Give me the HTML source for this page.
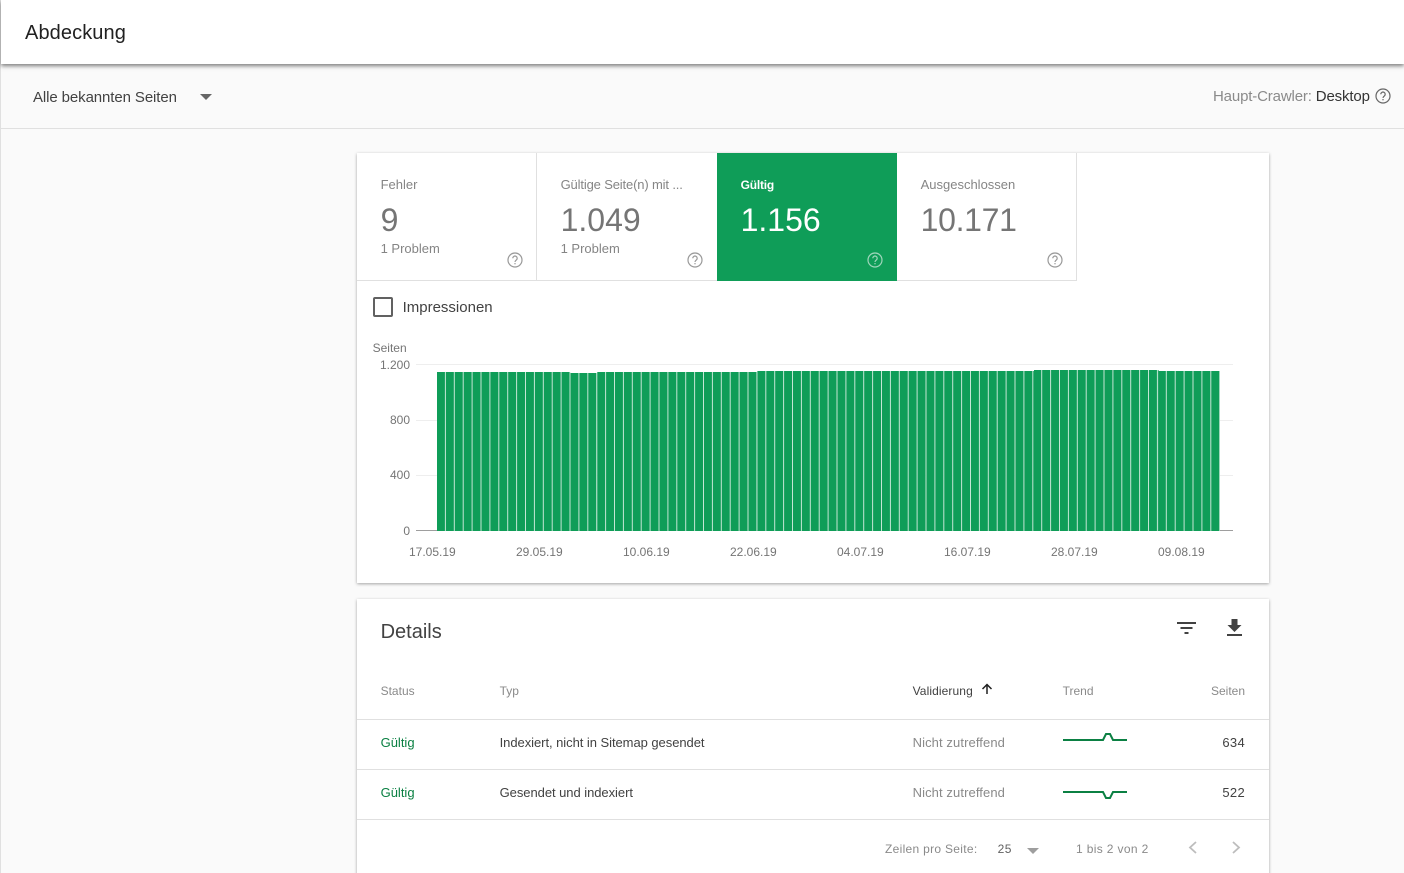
<!DOCTYPE html>
<html style="overflow:hidden;width:1404px;height:873px"><head><meta charset="utf-8"><title>Abdeckung</title>
<style>
html,body{margin:0;padding:0}
body{width:1404px;height:873px;overflow:hidden;position:relative;background:#fafafa;font-family:"Liberation Sans",sans-serif;color:#212121}
#w{position:absolute;left:0;top:0;width:1404px;height:873px;overflow:hidden}
.a{position:absolute;white-space:nowrap;line-height:1}
.b{position:absolute}
.card{position:absolute;background:#fff;box-shadow:0 1px 3px rgba(0,0,0,.35)}
.lab{font-size:13px;color:#858585}
.num{font-size:32px;color:#757575}
.g{font-size:12px;color:#757575}
.d{font-size:13px;color:#212121}
</style></head><body><div id="w">
<svg width="0" height="0" style="position:absolute"><defs>
<symbol id="q" viewBox="0 0 16 16"><circle cx="8" cy="8" r="7" fill="none" stroke="currentColor" stroke-width="1.2"/><path d="M5.8 6.3a2.2 2.2 0 1 1 3.4 1.8c-.8.5-1.2.9-1.2 1.9" fill="none" stroke="currentColor" stroke-width="1.2"/><rect x="7.4" y="11" width="1.2" height="1.3" fill="currentColor"/></symbol>
<pattern id="bars" patternUnits="userSpaceOnUse" x="437" y="0" width="8.9" height="10"><rect x="0" y="0" width="8" height="10" fill="#0f9d58"/><rect x="8" y="0" width="0.9" height="10" fill="#c4e6d5"/></pattern>
</defs></svg>

<div class="b" style="left:0;top:0;width:1px;height:873px;background:#e0e0e0"></div>
<div class="b" style="left:1px;top:0;width:1403px;height:64px;background:#fff;box-shadow:0 2px 4px rgba(0,0,0,.5)"></div>
<div class="a" style="left:25px;top:22.500px;font-size:20px;color:#212121;letter-spacing:.1px">Abdeckung</div>
<div class="a" style="left:33px;top:90px;font-size:15px;color:#424242;letter-spacing:-.1px">Alle bekannten Seiten</div>
<div class="b" style="left:200px;top:94px;width:0;height:0;border-left:6px solid transparent;border-right:6px solid transparent;border-top:6px solid #666"></div>
<div class="a" style="left:1213px;top:89px;font-size:15px;color:#8a8a8a;letter-spacing:-.15px">Haupt-Crawler: <span style="color:#333">Desktop</span></div>
<svg class="b" style="left:1374.6px;top:88px;color:#666" width="16" height="16"><use href="#q"/></svg>
<div class="b" style="left:1px;top:128px;width:1403px;height:1px;background:#e0e0e0"></div>

<div class="card" style="left:357px;top:153px;width:912px;height:430px"></div>
<div class="b" style="left:357px;top:280px;width:720px;height:1px;background:#e0e0e0"></div>
<div class="b" style="left:536px;top:153px;width:1px;height:128px;background:#e0e0e0"></div>
<div class="b" style="left:1076px;top:153px;width:1px;height:128px;background:#e0e0e0"></div>
<div class="b" style="left:717px;top:153px;width:180px;height:128px;background:#0f9d58"></div>

<div class="a lab" style="left:380.6px;top:178px">Fehler</div>
<div class="a num" style="left:380.6px;top:204px">9</div>
<div class="a lab" style="left:380.6px;top:242px">1 Problem</div>
<svg class="b" style="left:507px;top:252px;color:#999" width="16" height="16"><use href="#q"/></svg>

<div class="a lab" style="left:560.6px;top:178px;letter-spacing:-.15px">Gültige Seite(n) mit ...</div>
<div class="a num" style="left:560.6px;top:204px">1.049</div>
<div class="a lab" style="left:560.6px;top:242px">1 Problem</div>
<svg class="b" style="left:687px;top:252px;color:#999" width="16" height="16"><use href="#q"/></svg>

<div class="a lab" style="left:740.6px;top:179px;font-size:12px;color:#fff;font-weight:bold;letter-spacing:-.2px">Gültig</div>
<div class="a num" style="left:740.6px;top:204px;color:#fff">1.156</div>
<svg class="b" style="left:867px;top:252px;color:#9fd6bb" width="16" height="16"><use href="#q"/></svg>

<div class="a lab" style="left:920.6px;top:178px">Ausgeschlossen</div>
<div class="a num" style="left:920.6px;top:204px;letter-spacing:-.3px">10.171</div>
<svg class="b" style="left:1047px;top:252px;color:#999" width="16" height="16"><use href="#q"/></svg>

<div class="b" style="left:373px;top:297px;width:16px;height:16px;border:2px solid #616161;border-radius:2px"></div>
<div class="a" style="left:402.6px;top:300px;font-size:15px;color:#424242">Impressionen</div>

<div class="a g" style="left:372.6px;top:342px">Seiten</div>
<div class="a g" style="right:994px;top:359px">1.200</div>
<div class="a g" style="right:994px;top:414px">800</div>
<div class="a g" style="right:994px;top:469px">400</div>
<div class="a g" style="right:994px;top:525px">0</div>

<svg class="b" style="left:0;top:0" width="1404" height="873">
<rect x="416" y="364" width="817" height="1" fill="#eeeeee"/>
<rect x="416" y="420" width="817" height="1" fill="#eeeeee"/>
<rect x="416" y="475" width="817" height="1" fill="#eeeeee"/>
<rect x="416" y="530" width="817" height="1" fill="#9e9e9e"/>
<rect x="437" y="372" width="133.5" height="159" fill="url(#bars)"/>
<rect x="570.5" y="373" width="26.7" height="158" fill="url(#bars)"/>
<rect x="597.2" y="372" width="160" height="159" fill="url(#bars)"/>
<rect x="757.2" y="371" width="276.8" height="160" fill="url(#bars)"/>
<rect x="1034" y="370" width="124.6" height="161" fill="url(#bars)"/>
<rect x="1158.6" y="371" width="61.4" height="160" fill="url(#bars)"/>
</svg>

<div class="a g" style="left:409px;top:546px">17.05.19</div>
<div class="a g" style="left:516px;top:546px">29.05.19</div>
<div class="a g" style="left:623px;top:546px">10.06.19</div>
<div class="a g" style="left:730px;top:546px">22.06.19</div>
<div class="a g" style="left:837px;top:546px">04.07.19</div>
<div class="a g" style="left:944px;top:546px">16.07.19</div>
<div class="a g" style="left:1051px;top:546px">28.07.19</div>
<div class="a g" style="left:1158px;top:546px">09.08.19</div>

<div class="card" style="left:357px;top:599px;width:912px;height:290px"></div>
<div class="a" style="left:380.6px;top:622px;font-size:20px;color:#424242">Details</div>
<svg class="b" style="left:1177px;top:622px" width="19" height="12"><path d="M0 0h19v2H0zM3.500 5h12v2h-12zM7.500 10h4v2h-4z" fill="#424242"/></svg>
<svg class="b" style="left:1227px;top:619px" width="15" height="17"><path d="M4.500 0h6v6h4l-7 7-7-7h4zM0 15h15v2H0z" fill="#424242"/></svg>

<div class="a g" style="left:380.6px;top:685px;color:#8a8a8a">Status</div>
<div class="a g" style="left:499.6px;top:685px;color:#8a8a8a">Typ</div>
<div class="a" style="left:912.6px;top:685px;font-size:12px;color:#424242;letter-spacing:.1px">Validierung</div>
<svg class="b" style="left:981px;top:683px" width="12" height="12"><path d="M6 11V1.500M1.500 6L6 1.500 10.500 6" fill="none" stroke="#212121" stroke-width="1.500"/></svg>
<div class="a g" style="left:1062.6px;top:685px;color:#8a8a8a">Trend</div>
<div class="a g" style="right:159px;top:685px;color:#8a8a8a">Seiten</div>

<div class="b" style="left:357px;top:719px;width:912px;height:1px;background:#e0e0e0"></div>
<div class="b" style="left:357px;top:769px;width:912px;height:1px;background:#e0e0e0"></div>
<div class="b" style="left:357px;top:819px;width:912px;height:1px;background:#e0e0e0"></div>

<div class="a d" style="left:380.6px;top:736px;color:#0b8043">Gültig</div>
<div class="a d" style="left:499.6px;top:736px;color:#424242;letter-spacing:-.05px">Indexiert, nicht in Sitemap gesendet</div>
<div class="a d" style="left:912.6px;top:736px;color:#8a8a8a;letter-spacing:.1px">Nicht zutreffend</div>
<div class="a d" style="right:159px;top:736px;color:#424242;letter-spacing:.3px">634</div>

<div class="a d" style="left:380.6px;top:786px;color:#0b8043">Gültig</div>
<div class="a d" style="left:499.6px;top:786px;color:#424242;letter-spacing:-.05px">Gesendet und indexiert</div>
<div class="a d" style="left:912.6px;top:786px;color:#8a8a8a;letter-spacing:.1px">Nicht zutreffend</div>
<div class="a d" style="right:159px;top:786px;color:#424242;letter-spacing:.3px">522</div>

<svg class="b" style="left:0;top:0" width="1404" height="873">
<path d="M1063 740H1103L1106 734H1110L1113 740H1127" fill="none" stroke="#0b8043" stroke-width="2"/>
<path d="M1063 792H1103L1106 798H1110L1113 792H1127" fill="none" stroke="#0b8043" stroke-width="2"/>
<path d="M1196 842L1190 847.500L1196 853" fill="none" stroke="#bdbdbd" stroke-width="1.800"/>
<path d="M1233 842L1239 847.500L1233 853" fill="none" stroke="#bdbdbd" stroke-width="1.800"/>
</svg>

<div class="a g" style="left:885px;top:843px;color:#8a8a8a;letter-spacing:.3px">Zeilen pro Seite:</div>
<div class="a g" style="left:997.6px;top:843px;color:#616161;letter-spacing:.5px">25</div>
<div class="b" style="left:1027px;top:848px;width:0;height:0;border-left:6px solid transparent;border-right:6px solid transparent;border-top:6px solid #9e9e9e"></div>
<div class="a g" style="left:1076px;top:843px;color:#8a8a8a;letter-spacing:.35px">1 bis 2 von 2</div>
</div></body></html>
